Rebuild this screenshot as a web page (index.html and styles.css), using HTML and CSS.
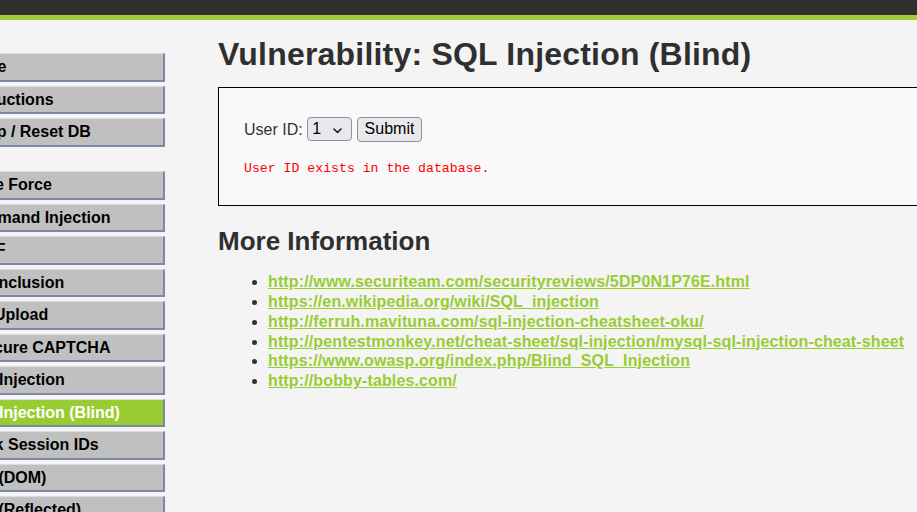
FILE: index.html
```html
<!DOCTYPE html>
<html lang="en">
<head>
    <meta charset="UTF-8">
    <meta name="viewport" content="width=device-width, initial-scale=1.0">
    <title>Vulnerability: SQL Injection (Blind)</title>
    <link rel="stylesheet" href="styles.css">
</head>
<body>
    <div class="header"></div>

    <div class="page">
        <nav class="menu">
            <ul class="menu-block">
                <li><a href="#">Home</a></li>
                <li><a href="#">Instructions</a></li>
                <li><a href="#">Setup / Reset DB</a></li>
            </ul>
            <ul class="menu-block">
                <li><a href="#">Brute Force</a></li>
                <li><a href="#">Command Injection</a></li>
                <li><a href="#">CSRF</a></li>
                <li><a href="#">File Inclusion</a></li>
                <li><a href="#">File Upload</a></li>
                <li><a href="#">Insecure CAPTCHA</a></li>
                <li><a href="#">SQL Injection</a></li>
                <li class="selected"><a href="#">SQL Injection (Blind)</a></li>
                <li><a href="#">Weak Session IDs</a></li>
                <li><a href="#">XSS (DOM)</a></li>
                <li><a href="#">XSS (Reflected)</a></li>
                <li><a href="#">XSS (Stored)</a></li>
            </ul>
        </nav>

        <main class="content">
            <h1>Vulnerability: SQL Injection (Blind)</h1>

            <div class="code-area">
                <form class="id-form" action="#" method="GET">
                    User ID:
                    <span class="select-wrap">
                        <select name="id">
                            <option value="1" selected>1</option>
                            <option value="2">2</option>
                            <option value="3">3</option>
                            <option value="4">4</option>
                            <option value="5">5</option>
                        </select>
                        <svg class="chevron" width="9" height="6" viewBox="0 0 9 6">
                            <polyline points="1,1 4.5,4.5 8,1" fill="none" stroke="#1a1a1a" stroke-width="1.6" stroke-linecap="round" stroke-linejoin="round"/>
                        </svg>
                    </span>
                    <input type="submit" name="Submit" value="Submit">
                </form>
                <pre class="result">User ID exists in the database.</pre>
            </div>

            <h2>More Information</h2>
            <ul class="links">
                <li><a href="#">http://www.securiteam.com/securityreviews/5DP0N1P76E.html</a></li>
                <li><a href="#">https://en.wikipedia.org/wiki/SQL_injection</a></li>
                <li><a href="#">http://ferruh.mavituna.com/sql-injection-cheatsheet-oku/</a></li>
                <li><a href="#">http://pentestmonkey.net/cheat-sheet/sql-injection/mysql-sql-injection-cheat-sheet</a></li>
                <li><a href="#">https://www.owasp.org/index.php/Blind_SQL_Injection</a></li>
                <li><a href="#">http://bobby-tables.com/</a></li>
            </ul>
        </main>
    </div>
</body>
</html>
```

FILE: styles.css
```css
* {
    box-sizing: border-box;
}

html, body {
    overflow: hidden;
}

body {
    margin: 0;
    background: #f4f4f4;
    font-family: 'Liberation Sans', Arial, sans-serif;
    font-size: 16px;
    color: #333;
}

.header {
    height: 20px;
    background: #2f2f2f;
    border-bottom: 5px solid #a2cc39;
}

.page {
    display: flex;
    align-items: flex-start;
}

/* left menu, scrolled partly out of view */
.menu {
    flex: none;
    width: 208px;
    margin-left: -43px;
    padding-top: 33px;
}

.menu-block {
    list-style: none;
    margin: 0 0 24.5px;
    padding: 0;
}

.menu-block li a {
    display: block;
    padding: 4px 5px 3px;
    margin-bottom: 4px;
    line-height: 18.5px;
    font-weight: bold;
    color: #000;
    text-decoration: none;
    white-space: nowrap;
    background: #c0c0c0;
    border-top: 1px solid #dcdcdc;
    border-right: 2px solid #7c89a5;
    border-bottom: 2px solid #7c89a5;
}

.menu-block li.selected a {
    background: #99cc33;
    color: #fff;
}

.content {
    flex: none;
    width: 760px;
    margin-left: 53px;
}

h1 {
    margin: 16px 0 14px;
    font-size: 32px;
    line-height: 36.8px;
    font-weight: bold;
    letter-spacing: 0.2px;
    color: #2f2f2f;
    white-space: nowrap;
}

.code-area {
    background: #f9f9f9;
    border: 1px solid #000;
    padding: 29px 25px 28px;
}

.id-form {
    margin: 0;
    line-height: 18.4px;
    color: #333;
}

.select-wrap {
    position: relative;
    display: inline-block;
    vertical-align: baseline;
}

select {
    appearance: none;
    -webkit-appearance: none;
    width: 45px;
    height: 24px;
    padding: 0 0 0 4px;
    font-family: 'Liberation Sans', Arial, sans-serif;
    font-size: 16px;
    color: #000;
    background: #e9e9ed;
    border: 1px solid #8f8f9d;
    border-radius: 4px;
}

.chevron {
    position: absolute;
    right: 10px;
    top: 11px;
    pointer-events: none;
}

input[type="submit"] {
    height: 24.5px;
    padding: 2px 7px;
    font-family: 'Liberation Sans', Arial, sans-serif;
    font-size: 16px;
    line-height: 18.4px;
    color: #000;
    background: #e9e9ed;
    border: 1px solid #8f8f9d;
    border-radius: 4px;
}

.result {
    margin: 19px 0 0;
    font-family: 'Liberation Mono', 'Courier New', monospace;
    font-size: 13.2px;
    line-height: 16px;
    color: #ff0000;
}

h2 {
    margin: 21px 0 15.5px;
    font-size: 26px;
    line-height: 29.9px;
    font-weight: bold;
    color: #2f2f2f;
}

.links {
    margin: 0;
    padding-left: 50px;
    line-height: 19.8px;
    color: #333;
}

.links a {
    color: #99cc33;
    font-weight: bold;
    letter-spacing: 0.13px;
    white-space: nowrap;
}
```
